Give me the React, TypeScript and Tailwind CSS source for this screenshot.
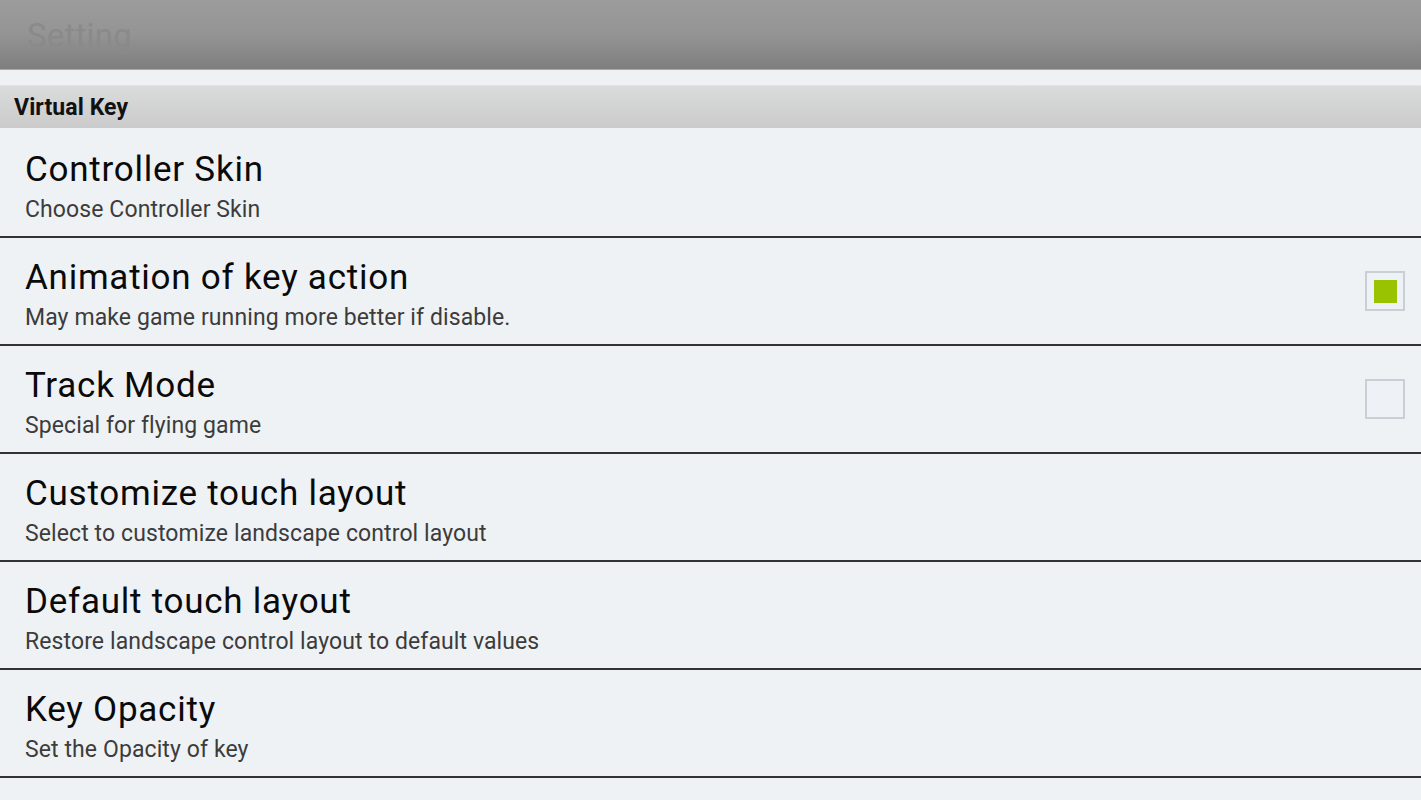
import { useState } from 'react'

type Pref = {
  title: string
  summary: string
  check?: boolean
}

const prefs: Pref[] = [
  { title: 'Controller Skin', summary: 'Choose Controller Skin' },
  { title: 'Animation of key action', summary: 'May make game running more better if disable.', check: true },
  { title: 'Track Mode', summary: 'Special for flying game', check: false },
  { title: 'Customize touch layout', summary: 'Select to customize landscape control layout' },
  { title: 'Default touch layout', summary: 'Restore landscape control layout to default values' },
  { title: 'Key Opacity', summary: 'Set the Opacity of key' },
]

function CheckBox({ on, onToggle }: { on: boolean; onToggle: () => void }) {
  return (
    <button
      type="button"
      onClick={onToggle}
      className="self-center w-[40px] h-[40px] flex items-center justify-center border-2 border-[#c9d0d5] bg-[#eef2f7] shrink-0"
    >
      {on && <span className="block w-[23px] h-[23px] bg-[#99c200]" />}
    </button>
  )
}

export default function App() {
  const [checks, setChecks] = useState<Record<number, boolean>>({ 1: true, 2: false })

  return (
    <div className="w-[1421px] h-[800px] overflow-hidden bg-[#eef2f5] font-['Roboto','Liberation_Sans',sans-serif]">
      {/* Title bar */}
      <div className="h-[70px] bg-gradient-to-b from-[#9c9c9c] via-[#949494] to-[#7e7e7e] px-[27px] flex items-start border-b border-[#a9a9a9]">
        <span className="text-[33px] leading-[72px] text-[#8a8a8a] tracking-[0.2px]">Setting</span>
      </div>
      <div className="h-[16px] bg-[#f0f1f3] border-b border-[#e2e4e6]" />

      {/* Category header */}
      <div className="h-[42px] bg-gradient-to-b from-[#dadbdb] to-[#cbcbcb] px-[14px] flex items-center">
        <span className="text-[23px] font-bold text-[#111] tracking-[0.1px] pt-[2px]">Virtual Key</span>
      </div>

      <div className="pt-[2px]">
        {prefs.map((p, i) => (
          <div
            key={p.title}
            className="h-[108px] border-b-2 border-[#333] flex items-start pl-[25px] pr-[16px]"
          >
            <div className="flex-1 min-w-0 pt-[20px]">
              <p className="text-[35px] leading-[40px] text-[#0a0a0a] tracking-[0.75px]">{p.title}</p>
              <p className="mt-[6px] text-[23px] leading-[28px] text-[#3c3c3c] tracking-[0.1px]">{p.summary}</p>
            </div>
            {p.check !== undefined && (
              <CheckBox
                on={!!checks[i]}
                onToggle={() => setChecks({ ...checks, [i]: !checks[i] })}
              />
            )}
          </div>
        ))}
      </div>
    </div>
  )
}
